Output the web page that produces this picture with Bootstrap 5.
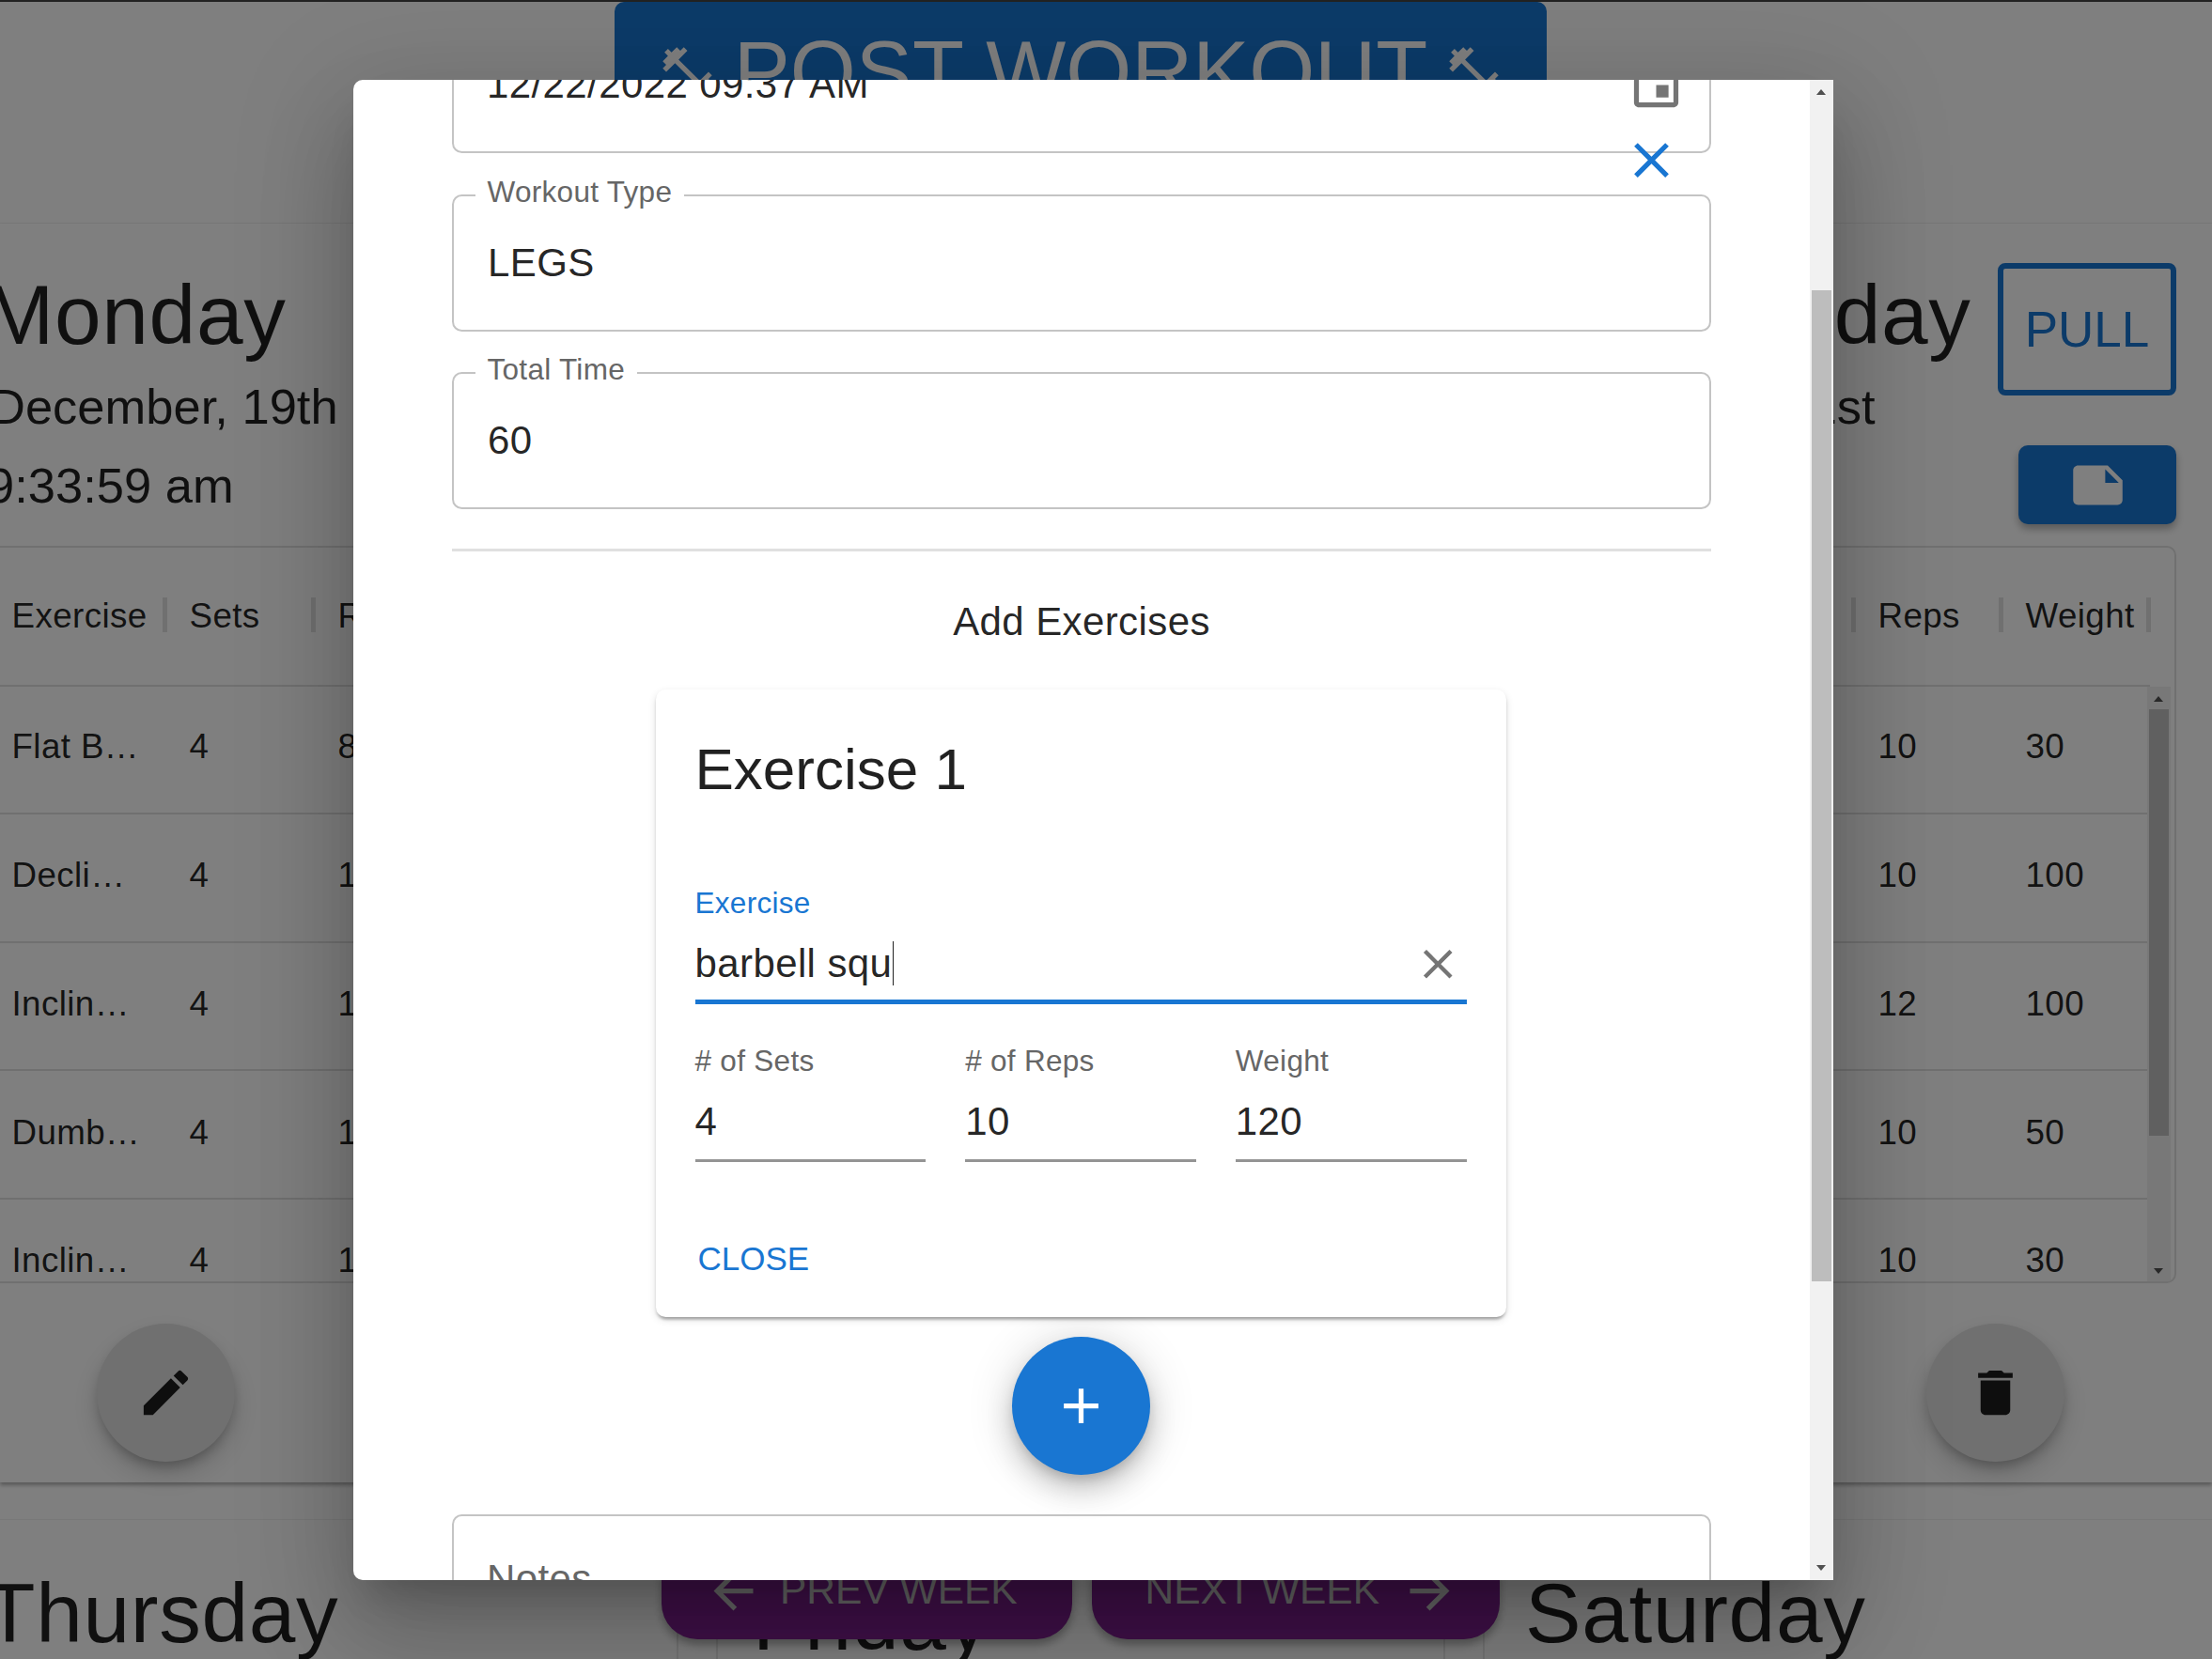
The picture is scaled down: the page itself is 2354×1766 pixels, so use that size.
<!DOCTYPE html>
<html lang="en">
<head>
  <meta charset="UTF-8">
  <title>Post Workout</title>
  <link href="https://cdn.jsdelivr.net/npm/bootstrap@5.3.3/dist/css/bootstrap.min.css" rel="stylesheet">
  <style>
    body { width: 2354px; height: 1766px; overflow: hidden; position: relative; background: #fff; color: rgba(0,0,0,.87); font-family: "Liberation Sans", Arial, sans-serif; font-size: 42px; }

    /* page behind the dialog */
    .top-bar { height: 238px; padding-right: 54px; border-top: 2px solid #444; border-bottom: 1px solid #f0f0f0; }
    .post-btn { width: 992px; height: 148px; background: #1976d2; color: #fff; border: 0; border-radius: 10px; font-size: 90px; line-height: 1; gap: 18px; padding: 0; }
    .post-btn svg { width: 63px; height: 63px; fill: currentColor; }
    .week-sheet { height: 1340px; box-shadow: 0 3px 4px rgba(0,0,0,.3); position: relative; }
    .day-row { margin: 0 38px 0 -14px; }
    .day-col { width: 691px; }
    .day-head { height: 343px; }
    .day-title { font-size: 89.25px; line-height: 90px; margin-left: -3px; letter-spacing: .00735em; }
    .head-text { padding-top: 52px; }
    .day-date { font-size: 52.5px; line-height: 83px; margin: 11px 0 0 3px; }
    .day-time { font-size: 52.5px; line-height: 83px; margin: 1px 0 0; }
    .kind-btn { width: 190px; height: 141px; margin-top: 42px; border: 6px solid #1976d2; border-radius: 8px; color: #1976d2; font-size: 53px; padding: 0; background: transparent; }
    .note-btn { width: 168px; height: 84px; margin-top: 53px; background: #1976d2; border: 0; border-radius: 10px; padding: 0; box-shadow: 0 5px 8px rgba(0,0,0,.3); }
    .note-btn svg { width: 63px; height: 63px; fill: #fff; }
    .table-box { border: 2.6px solid #e0e0e0; border-radius: 10px; height: 785px; overflow: hidden; }
    table.ex-table { table-layout: fixed; width: 661px; margin: 0; font-size: 36.75px; letter-spacing: .01071em; background: transparent; flex: none; }
    table.ex-table th, table.ex-table td { padding: 0 26px 0 24.5px; border-bottom: 2px solid #e0e0e0; background: transparent; color: rgba(0,0,0,.87); vertical-align: middle; }
    table.ex-table th { position: relative; height: 147px; font-weight: 400; overflow: visible; }
    table.ex-table th::after { content: ""; position: absolute; right: -1px; top: 53px; width: 5px; height: 37px; background: #e0e0e0; }
    table.ex-table td { height: 136.6px; padding-bottom: 5px; }
    .col-name { width: 189px; } .col-num { width: 158px; } .col-tail { width: 157px; }
    .rows-clip { height: 635px; overflow: hidden; }
    .rows-clip table.ex-table { margin-top: -1.5px; }
    .bar-track { position: relative; width: 25px; background: #f1f1f1; flex: none; }
    .rows-clip .bar-track { margin-left: -3px; }
    .bar-thumb { position: absolute; left: 2px; width: 21px; background: #c1c1c1; }
    .list-thumb { top: 24px; height: 454px; }
    .dialog-thumb { top: 224px; height: 1055px; background: #bdbdbd; }
    .arrow-up, .arrow-down { position: absolute; left: 7px; width: 0; height: 0; border-left: 5px solid transparent; border-right: 5px solid transparent; }
    .arrow-up { top: 10px; border-bottom: 6px solid #505050; }
    .arrow-down { bottom: 10px; border-top: 6px solid #505050; }
    .round-row { padding: 43px 157px 0 103px; }
    .round-grey { width: 147px; height: 147px; border-radius: 50%; border: 0; background: #e0e0e0; padding: 0; box-shadow: 0 8px 14px -4px rgba(0,0,0,.3), 0 14px 28px 3px rgba(0,0,0,.12); }
    .round-grey svg { width: 63px; height: 63px; fill: rgba(0,0,0,.87); }
    .lower-row { margin: 39px 0 0 -14px; height: 188px; border-top: 1px solid #f0f0f0; }
    .lower-left { width: 734px; padding-top: 54px; }
    .lower-mid { width: 860px; padding: 0 40px; border-left: 2px solid #e8e8e8; border-right: 2px solid #e8e8e8; }
    .lower-inner { height: 100%; padding: 62px 0 0 40px; border-left: 2px solid #e8e8e8; border-right: 2px solid #e8e8e8; }
    .lower-right { padding: 54px 0 0 46px; }
    .week-btn { position: absolute; top: 1641px; height: 104px; background: #7f2090; color: #ccc; border: 0; border-radius: 38px; font-size: 42.5px; box-shadow: 0 6px 10px rgba(0,0,0,.3); }
    .week-btn svg { width: 63px; height: 63px; fill: currentColor; }
    .btn-prev { left: 704px; width: 437px; padding: 0 0 0 45px; gap: 18px; }
    .btn-next { left: 1162px; width: 434px; padding: 0 43px 0 0; gap: 22px; }

    /* dialog */
    .dim-layer { position: absolute; inset: 0; background: rgba(0,0,0,.5); }
    .dialog-box { position: absolute; left: 376px; top: 85px; width: 1575px; height: 1597px; background: #fff; border-radius: 10px 0 0 10px; box-shadow: 0 29px 39px -18px rgba(0,0,0,.2), 0 63px 100px 8px rgba(0,0,0,.14), 0 24px 120px 21px rgba(0,0,0,.12); }
    .dialog-scroll { flex: 1; overflow: hidden; padding: 0 105px; border-radius: 10px 0 0 10px; }
    .close-x { position: absolute; left: 1349.5px; top: 53.5px; width: 63px; height: 63px; fill: #1976d2; }
    .out-field { position: relative; height: 146px; margin-top: 43.5px; border: 2.6px solid #c4c4c4; border-radius: 10.5px; display: flex; align-items: center; padding-left: 36px; line-height: 1; letter-spacing: .00938em; }
    .field-first { margin-top: -68px; padding-left: 35px; }
    .out-label { position: absolute; left: 22.5px; top: -24px; padding: 0 13px; background: #fff; color: #666; font-size: 31.5px; line-height: 38px; letter-spacing: .00938em; }
    .date-icon { position: absolute; right: 25.5px; top: 40px; width: 63px; height: 63px; fill: #757575; }
    .rule-line { height: 3px; background: #e0e0e0; margin-top: 42px; }
    .add-title { font-size: 42px; line-height: 66px; margin-top: 42px; letter-spacing: .00938em; }
    .ex-card { width: 905px; height: 668px; margin: 39px 0 0 216.5px; border: 0; border-radius: 10.5px; padding: 47px 42px 0; box-shadow: 0 5px 3px -3px rgba(0,0,0,.2), 0 3px 3px rgba(0,0,0,.14), 0 3px 8px rgba(0,0,0,.12); color: rgba(0,0,0,.87); }
    .ex-title { font-size: 62px; line-height: 76px; margin: 0; font-weight: 400; }
    .in-label { font-size: 31.5px; line-height: 38px; color: #666; letter-spacing: .00938em; }
    .in-label-on { color: #1976d2; margin-top: 85px; }
    .in-value { font-size: 42px; line-height: 50px; letter-spacing: .00938em; }
    .search-line { height: 68px; margin-top: 21px; border-bottom: 5px solid #1976d2; position: relative; }
    .type-caret { border-right: 1.5px solid #222; margin-left: 1px; }
    .clear-x { position: absolute; right: 4px; top: -1px; width: 52.5px; height: 52.5px; fill: #757575; }
    .num-row { gap: 42px; margin-top: 41px; }
    .num-cell { width: 246px; }
    .num-line { height: 68px; margin-top: 21px; border-bottom: 3px solid #949494; }
    .close-link { font-size: 35px; color: #1976d2; padding: 0; border: 0; line-height: 42px; margin: 82px 0 0 3px; text-align: left; background: none; align-self: flex-start; }
    .round-add { display: flex; width: 147px; height: 147px; margin: 21px 0 0 595.5px; border-radius: 50%; border: 0; background: #1976d2; padding: 0; align-items: center; justify-content: center; box-shadow: 0 8px 14px -4px rgba(0,0,0,.2), 0 16px 28px 2px rgba(0,0,0,.14), 0 3px 48px 5px rgba(0,0,0,.12); }
    .round-add svg { width: 63px; height: 63px; fill: #fff; }
    .notes-field { align-items: flex-start; padding: 46px 0 0 35px; color: #666; margin-top: 42px; }
  </style>
</head>
<body>
  <header class="top-bar d-flex justify-content-center">
    <button class="btn post-btn d-flex align-items-center justify-content-center" type="button">
      <svg viewBox="0 0 24 24"><path d="M20.57 14.86 22 13.43 20.57 12 17 15.57 8.43 7 12 3.43 10.57 2 9.14 3.43 7.71 2 5.57 4.14 4.14 2.71 2.71 4.14l1.43 1.43L2 7.71l1.43 1.43L2 10.57 3.43 12 7 8.43 15.57 17 12 20.57 13.43 22l1.43-1.43L16.29 22l2.14-2.14 1.43 1.43 1.43-1.43-1.43-1.43L22 16.29z"/></svg>
      POST WORKOUT
      <svg viewBox="0 0 24 24"><path d="M20.57 14.86 22 13.43 20.57 12 17 15.57 8.43 7 12 3.43 10.57 2 9.14 3.43 7.71 2 5.57 4.14 4.14 2.71 2.71 4.14l1.43 1.43L2 7.71l1.43 1.43L2 10.57 3.43 12 7 8.43 15.57 17 12 20.57 13.43 22l1.43-1.43L16.29 22l2.14-2.14 1.43 1.43 1.43-1.43-1.43-1.43L22 16.29z"/></svg>
    </button>
  </header>

  <section class="week-sheet">
    <div class="day-row d-flex justify-content-between">
      <div class="day-col">
        <div class="day-head">
          <div class="head-text">
            <div class="day-title">Monday</div>
            <div class="day-date">December, 19th</div>
            <div class="day-time">9:33:59 am</div>
          </div>
        </div>
        <div class="table-box">
          <table class="table ex-table">
            <colgroup><col class="col-name"><col class="col-num"><col class="col-tail"><col class="col-tail"></colgroup>
            <thead><tr><th>Exercise</th><th>Sets</th><th>Reps</th><th>Weight</th></tr></thead>
          </table>
          <div class="rows-clip d-flex">
            <table class="table ex-table">
              <colgroup><col class="col-name"><col class="col-num"><col class="col-tail"><col class="col-tail"></colgroup>
              <tbody>
                <tr><td class="text-truncate">Flat Bench Press</td><td>4</td><td>8</td><td>135</td></tr>
                <tr><td class="text-truncate">Decline Press</td><td>4</td><td>10</td><td>100</td></tr>
                <tr><td class="text-truncate">Incline Press</td><td>4</td><td>10</td><td>100</td></tr>
                <tr><td class="text-truncate">Dumbbell Flyes</td><td>4</td><td>10</td><td>50</td></tr>
                <tr><td class="text-truncate">Incline Flyes</td><td>4</td><td>10</td><td>30</td></tr>
              </tbody>
            </table>
            <div class="bar-track"><span class="arrow-up"></span><div class="bar-thumb list-thumb"></div><span class="arrow-down"></span></div>
          </div>
        </div>
      </div>

      <div class="day-col"></div>

      <div class="day-col">
        <div class="day-head d-flex justify-content-between">
          <div class="head-text">
            <div class="day-title">Wednesday</div>
            <div class="day-date">December, 21st</div>
            <div class="day-time">9:33:59 am</div>
          </div>
          <div class="d-flex flex-column align-items-end">
            <button class="btn kind-btn" type="button">PULL</button>
            <button class="btn note-btn d-flex align-items-center justify-content-center" type="button">
              <svg viewBox="0 0 24 24"><path d="M22 10l-6-6H4c-1.1 0-2 .9-2 2v12.01c0 1.1.9 1.99 2 1.99l16-.01c1.1 0 2-.89 2-1.99v-8zm-7-4.5 5.5 5.5H15V5.5z"/></svg>
            </button>
          </div>
        </div>
        <div class="table-box">
          <table class="table ex-table">
            <colgroup><col class="col-name"><col class="col-num"><col class="col-tail"><col class="col-tail"></colgroup>
            <thead><tr><th>Exercise</th><th>Sets</th><th>Reps</th><th>Weight</th></tr></thead>
          </table>
          <div class="rows-clip d-flex">
            <table class="table ex-table">
              <colgroup><col class="col-name"><col class="col-num"><col class="col-tail"><col class="col-tail"></colgroup>
              <tbody>
                <tr><td class="text-truncate">Deadlift</td><td>4</td><td>10</td><td>30</td></tr>
                <tr><td class="text-truncate">Lat Pulldown</td><td>4</td><td>10</td><td>100</td></tr>
                <tr><td class="text-truncate">Seated Row</td><td>4</td><td>12</td><td>100</td></tr>
                <tr><td class="text-truncate">Bicep Curl</td><td>4</td><td>10</td><td>50</td></tr>
                <tr><td class="text-truncate">Hammer Curl</td><td>4</td><td>10</td><td>30</td></tr>
              </tbody>
            </table>
            <div class="bar-track"><span class="arrow-up"></span><div class="bar-thumb list-thumb"></div><span class="arrow-down"></span></div>
          </div>
        </div>
      </div>
    </div>

    <div class="round-row d-flex justify-content-between">
      <button class="btn round-grey d-flex align-items-center justify-content-center" type="button">
        <svg viewBox="0 0 24 24"><path d="M3 17.25V21h3.75L17.81 9.94l-3.75-3.75L3 17.25zM20.71 7.04c.39-.39.39-1.02 0-1.41l-2.34-2.34a.9959.9959 0 0 0-1.41 0l-1.83 1.83 3.75 3.75 1.83-1.83z"/></svg>
      </button>
      <button class="btn round-grey d-flex align-items-center justify-content-center" type="button">
        <svg viewBox="0 0 24 24"><path d="M6 19c0 1.1.9 2 2 2h8c1.1 0 2-.9 2-2V7H6v12zM19 4h-3.5l-1-1h-5l-1 1H5v2h14V4z"/></svg>
      </button>
    </div>
  </section>

  <section class="lower-row d-flex">
    <div class="lower-left"><div class="day-title">Thursday</div></div>
    <div class="lower-mid"><div class="lower-inner"><div class="day-title">Friday</div></div></div>
    <div class="lower-right"><div class="day-title">Saturday</div></div>
  </section>

  <button class="btn week-btn btn-prev d-flex align-items-center justify-content-start" type="button">
    <svg viewBox="0 0 24 24"><path d="M20 11H7.83l5.59-5.59L12 4l-8 8 8 8 1.41-1.41L7.83 13H20v-2z"/></svg>
    PREV WEEK
  </button>
  <button class="btn week-btn btn-next d-flex align-items-center justify-content-end" type="button">
    NEXT WEEK
    <svg viewBox="0 0 24 24"><path d="m12 4-1.41 1.41L16.17 11H4v2h12.17l-5.58 5.59L12 20l8-8z"/></svg>
  </button>

  <div class="dim-layer"></div>

  <div class="dialog-box d-flex">
    <div class="dialog-scroll">
      <div class="out-field field-first">
        12/22/2022 09:37 AM
        <svg class="date-icon" viewBox="0 0 24 24"><path d="M17 12h-5v5h5v-5zM16 1v2H8V1H6v2H5c-1.11 0-1.99.9-1.99 2L3 19c0 1.1.89 2 2 2h14c1.1 0 2-.9 2-2V5c0-1.1-.9-2-2-2h-1V1h-2zm3 18H5V8h14v11z"/></svg>
      </div>
      <div class="out-field"><span class="out-label">Workout Type</span>LEGS</div>
      <div class="out-field"><span class="out-label">Total Time</span>60</div>
      <div class="rule-line"></div>
      <div class="add-title text-center">Add Exercises</div>

      <div class="card ex-card">
        <h5 class="ex-title">Exercise 1</h5>
        <div class="in-label in-label-on">Exercise</div>
        <div class="search-line in-value">barbell squ<span class="type-caret"></span>
          <svg class="clear-x" viewBox="0 0 24 24"><path d="M19 6.41 17.59 5 12 10.59 6.41 5 5 6.41 10.59 12 5 17.59 6.41 19 12 13.41 17.59 19 19 17.59 13.41 12z"/></svg>
        </div>
        <div class="num-row d-flex">
          <div class="num-cell"><div class="in-label"># of Sets</div><div class="num-line in-value">4</div></div>
          <div class="num-cell"><div class="in-label"># of Reps</div><div class="num-line in-value">10</div></div>
          <div class="num-cell"><div class="in-label">Weight</div><div class="num-line in-value">120</div></div>
        </div>
        <button class="btn close-link" type="button">CLOSE</button>
      </div>

      <button class="btn round-add" type="button">
        <svg viewBox="0 0 24 24"><path d="M19 13h-6v6h-2v-6H5v-2h6V5h2v6h6v2z"/></svg>
      </button>

      <div class="out-field notes-field">Notes</div>
    </div>

    <div class="bar-track"><span class="arrow-up"></span><div class="bar-thumb dialog-thumb"></div><span class="arrow-down"></span></div>
    <svg class="close-x" viewBox="0 0 24 24"><path d="M19 6.41 17.59 5 12 10.59 6.41 5 5 6.41 10.59 12 5 17.59 6.41 19 12 13.41 17.59 19 19 17.59 13.41 12z"/></svg>
  </div>

  <script src="https://cdn.jsdelivr.net/npm/bootstrap@5.3.3/dist/js/bootstrap.bundle.min.js"></script>
</body>
</html>
